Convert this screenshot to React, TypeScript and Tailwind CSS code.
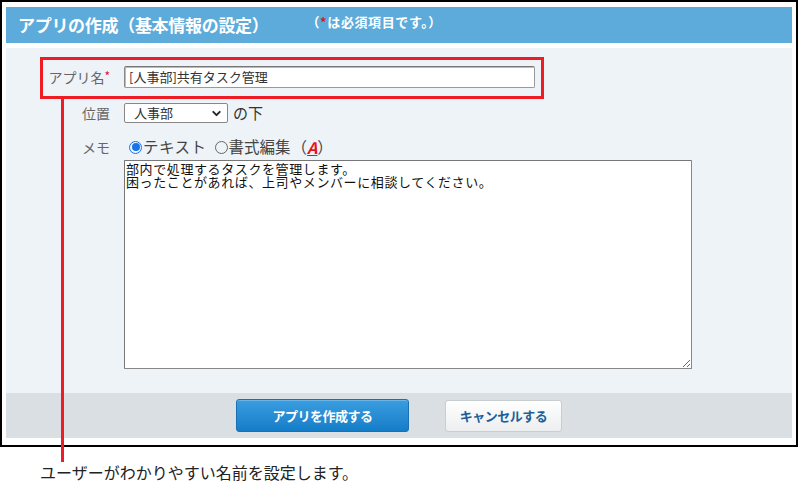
import { ChevronDown } from 'lucide-react';

const jp = { fontFamily: '"Noto Sans CJK JP", "Noto Sans", sans-serif' };

const Header = () => (
  <div className="flex items-center h-[36px] bg-[#5dabda] pl-[12px]">
    <div className="text-[17px] font-bold text-white tracking-[-0.3px]">アプリの作成（基本情報の設定）</div>
    <div className="ml-[38px] -mt-[6px] text-[13px] font-bold text-white tracking-[0.6px]">
      （<span className="text-[#e8121b]">*</span>は必須項目です。）
    </div>
  </div>
);

const Form = () => (
  <div className="h-[345px] bg-[#eef3f7] pt-[18px]">
    <div className="flex items-center h-[22px]">
      <div className="w-[106px] text-right text-[14px] text-[#666] pr-[2px]">
        アプリ名<span className="text-[#e8121b] text-[12px] align-top">*</span>
      </div>
      <div className="ml-[12px] w-[411px] h-[22px] bg-white border border-[#999] border-t-[#777] border-l-[#888] rounded-[2px] shadow-[inset_1px_1px_0_#bbb] flex items-center pl-[4px] text-[13px] text-[#333]">
        [人事部]共有タスク管理
      </div>
    </div>
    <div className="flex items-center h-[20px] mt-[15px]">
      <div className="w-[106px] text-right text-[14px] text-[#666] pr-[2px]">位置</div>
      <div className="ml-[12px] w-[104px] h-[20px] bg-white border border-[#888] rounded-[2px] flex items-center justify-between pl-[9px] pr-[4px] text-[13px] text-[#333]">
        <span>人事部</span>
        <ChevronDown size={13} strokeWidth={3.5} className="text-[#222]" />
      </div>
      <div className="ml-[5px] text-[15px] text-[#333]">の下</div>
    </div>
    <div className="flex items-center h-[20px] mt-[14px]">
      <div className="w-[106px] text-right text-[14px] text-[#666] pr-[2px]">メモ</div>
      <div className="ml-[17px] flex items-center text-[15.5px] text-[#444]">
        <span className="w-[13px] h-[13px] rounded-full border border-[#1a73e8] flex items-center justify-center">
          <span className="w-[8px] h-[8px] rounded-full bg-[#1a73e8]" />
        </span>
        <span className="ml-[1px] tracking-[0.5px]">テキスト</span>
        <span className="ml-[8px] w-[13px] h-[13px] rounded-full border border-[#666]" />
        <span className="ml-[1px]">書式編集</span>
        <span className="ml-[1px]">（</span>
        <span className="text-[#e8121b] font-bold italic underline text-[16px] leading-none">A</span>
        <span>）</span>
      </div>
    </div>
    <div className="flex mt-[3px]">
      <textarea
        readOnly
        defaultValue={'部内で処理するタスクを管理します。\n困ったことがあれば、上司やメンバーに相談してください。'}
        className="ml-[118px] w-[568px] h-[209px] bg-white border border-[#888] border-t-[#777] border-l-[#777] rounded-[1px] px-[1px] py-[1px] text-[13px] leading-[13px] text-[#111] tracking-[0.6px] outline-none"
        style={jp}
      />
    </div>
  </div>
);

const Footer = () => (
  <div className="h-[45px] bg-[#d9dfe2] flex items-center justify-center gap-[36px]">
    <button className="w-[173px] h-[33px] rounded-[3px] border border-[#1d6fb0] bg-gradient-to-b from-[#3a9de0] to-[#137dc8] text-white text-[13px] font-bold tracking-[-0.5px] shadow-[inset_0_1px_0_rgba(255,255,255,0.25)]">
      アプリを作成する
    </button>
    <button className="w-[117px] h-[32px] rounded-[3px] border border-[#c8cdd0] bg-gradient-to-b from-white to-[#eceeef] text-[#1f5f96] text-[13px] font-bold tracking-[-0.5px]">
      キャンセルする
    </button>
  </div>
);

const App = () => (
  <div className="relative w-[800px] h-[500px] bg-white overflow-hidden" style={jp}>
    <div className="w-[798px] h-[447px] border-2 border-black pt-[5px] px-[4px]">
      <Header />
      <div className="h-[5px]" />
      <Form />
      <Footer />
    </div>
    <div className="ml-[40px] mt-[14px] text-[16px] leading-[22px] text-[#222]">
      ユーザーがわかりやすい名前を設定します。
    </div>
    {/* annotation callout */}
    <div className="absolute left-[40px] top-[57px] w-[504px] h-[42px] border-[3px] border-[#ee1c25]" />
    <div className="absolute left-[61px] top-[99px] w-[3px] h-[363px] bg-[#ee1c25]" />
  </div>
);

export default App;
